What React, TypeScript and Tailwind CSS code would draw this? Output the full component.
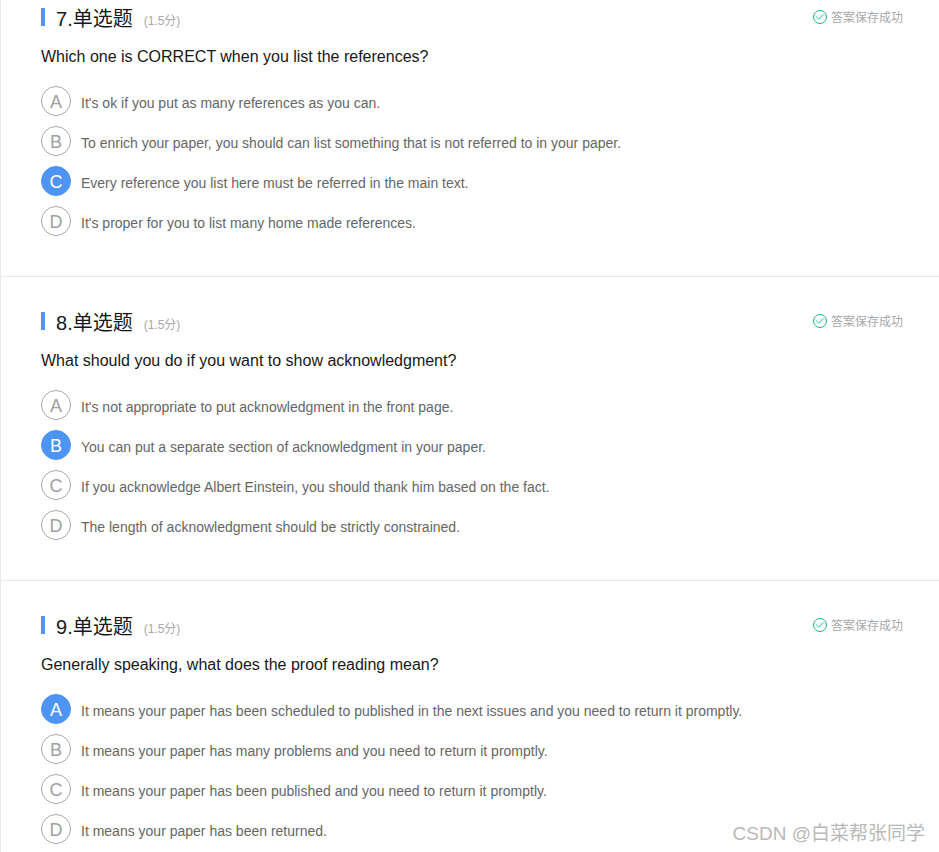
import { Check } from 'lucide-react'

interface Question {
  num: number
  text: string
  answer: string
  options: string[]
}

const questions: Question[] = [
  {
    num: 7,
    text: 'Which one is CORRECT when you list the references?',
    answer: 'C',
    options: [
      "It's ok if you put as many references as you can.",
      'To enrich your paper, you should can list something that is not referred to in your paper.',
      'Every reference you list here must be referred in the main text.',
      "It's proper for you to list many home made references.",
    ],
  },
  {
    num: 8,
    text: 'What should you do if you want to show acknowledgment?',
    answer: 'B',
    options: [
      "It's not appropriate to put acknowledgment in the front page.",
      'You can put a separate section of acknowledgment in your paper.',
      'If you acknowledge Albert Einstein, you should thank him based on the fact.',
      'The length of acknowledgment should be strictly constrained.',
    ],
  },
  {
    num: 9,
    text: 'Generally speaking, what does the proof reading mean?',
    answer: 'A',
    options: [
      'It means your paper has been scheduled to published in the next issues and you need to return it promptly.',
      'It means your paper has many problems and you need to return it promptly.',
      'It means your paper has been published and you need to return it promptly.',
      'It means your paper has been returned.',
    ],
  },
]

const letters = ['A', 'B', 'C', 'D']

function QuestionBlock({ q, first }: { q: Question; first: boolean }) {
  return (
    <section className={`border-b border-[#e9e9e9] pl-[40px] pr-[41px] ${first ? 'pt-2 h-[277px]' : 'pt-[35px] h-[304px]'}`}>
      <div className="flex items-start justify-between h-[18px]">
        <div className="flex items-center h-[18px]">
          <span className="w-1 h-[18px] bg-[#4e94f5]" />
          <span className="ml-[11px] mt-1 text-[20px] leading-[18px] text-[#181818]">{q.num}.单选题</span>
          <span className="ml-[11px] mt-[7px] text-[12px] leading-[18px] text-[#a8a8a8]">(1.5分)</span>
        </div>
        <div className="flex items-center mr-[-5px] h-[18px]">
          <span className="w-[14px] h-[14px] mt-[0px] rounded-full border border-[#14b981] flex items-center justify-center">
            <Check size={10} strokeWidth={2.25} className="text-[#14b981]" />
          </span>
          <span className="ml-1 mt-[2px] text-[12px] leading-[18px] text-[#a8a8a8]">答案保存成功</span>
        </div>
      </div>
      <p className="mt-[19px] text-[16px] leading-[24px] text-[#181818]">{q.text}</p>
      <ul className="mt-[17px] flex flex-col gap-[10px]">
        {q.options.map((opt, i) => {
          const picked = letters[i] === q.answer
          return (
            <li key={i} className="flex items-center h-[30px]">
              <span
                className={`w-[30px] h-[30px] pt-[2px] rounded-full flex items-center justify-center text-[18px] border ${
                  picked ? 'bg-[#4e94f5] border-[#4e94f5] text-white' : 'border-[#a8a8a8] text-[#a0a0a0]'
                }`}
              >
                {letters[i]}
              </span>
              <span className="ml-[10px] mt-[4px] text-[14px] leading-[20px] text-[#666666]">{opt}</span>
            </li>
          )
        })}
      </ul>
    </section>
  )
}

export default function App() {
  return (
    <div className="relative h-[852px] overflow-hidden bg-white border-l border-[#e9e9e9] font-['Liberation_Sans','Noto_Sans_CJK_SC',sans-serif]">
      {questions.map((q, i) => (
        <QuestionBlock key={q.num} q={q} first={i === 0} />
      ))}
      <span className="absolute right-[14px] bottom-[6px] text-[19px] leading-[24px] text-[#b8b8b8]">CSDN @白菜帮张同学</span>
    </div>
  )
}
